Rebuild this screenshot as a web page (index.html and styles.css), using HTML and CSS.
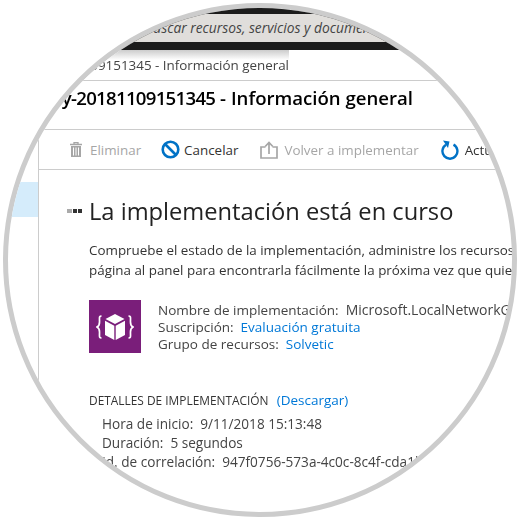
FILE: index.html
```html
<!DOCTYPE html>
<html lang="es">
<head>
    <meta charset="UTF-8">
    <title>Información general</title>
    <link rel="stylesheet" href="styles.css">
</head>
<body>

<div class="lens">
    <div class="topbar">
        <div class="search">Buscar recursos, servicios y documentos</div>
    </div>

    <div class="crumb"><span>Microsoft.LocalNetworkGateway-20181109151345 - Información general</span></div>
    <div class="title"><span><span class="title-id">Microsoft.LocalNetworkGateway-20181109151345</span> - Información general</span></div>

    <div class="panes">
        <div class="sidebar">
            <div class="side-active"></div>
        </div>

        <div class="main">
            <div class="toolbar">
                <div class="tool disabled tool-delete">
                    <svg width="12" height="15" viewBox="0 0 12 15"><path d="M0 2.500h12M4 2.500V.7h4v1.800" fill="none" stroke="#a6a6a6" stroke-width="1.300"/><path d="M1 4h10v11H1z" fill="#a6a6a6"/><path d="M3.500 5.500v8M6 5.500v8M8.500 5.500v8" stroke="#fff" stroke-width="1"/></svg>
                    <span>Eliminar</span>
                </div>
                <div class="tool tool-cancel">
                    <svg width="19" height="19" viewBox="0 0 19 19"><circle cx="9.500" cy="9.500" r="7.800" fill="none" stroke="#0072c6" stroke-width="2.600"/><path d="M4 4l11 11" stroke="#0072c6" stroke-width="2.600"/></svg>
                    <span>Cancelar</span>
                </div>
                <div class="tool disabled tool-redeploy">
                    <svg width="18" height="18" viewBox="0 0 18 18"><path d="M5.500 6H1v11h16V6h-4.500" fill="none" stroke="#a6a6a6" stroke-width="1.700"/><path d="M9 13V2M5.200 5.500L9 1.500l3.800 4" fill="none" stroke="#a6a6a6" stroke-width="1.700"/></svg>
                    <span>Volver a implementar</span>
                </div>
                <div class="tool tool-refresh">
                    <svg width="18" height="20" viewBox="0 0 18 20"><path d="M12.500 4.600A7.500 7.500 0 1 1 5 4.800" fill="none" stroke="#0072c6" stroke-width="2.400"/><path d="M2 0.500l6.500 1-1.500 6.500z" fill="#0072c6"/></svg>
                    <span>Actualizar</span>
                </div>
            </div>

            <div class="content">
                <h1 class="heading">
                    <span class="dots"><i class="dot-faint"></i><i></i><i></i></span>
                    La implementación está en curso
                </h1>

                <p class="intro">Compruebe el estado de la implementación, administre los recursos o ancle esta<br>página al panel para encontrarla fácilmente la próxima vez que quiera volver.</p>

                <div class="summary">
                    <div class="summary-icon">
                        <svg width="38" height="30" viewBox="0 0 38 30">
                            <path d="M5.500 4C3 4 3.500 5.500 3.500 8.500s.5 5-2.500 6.500c3 1.500 2.500 3.500 2.500 6.500S3 26 5.500 26M32.500 4c2.500 0 2 1.500 2 4.500s-.5 5 2.500 6.500c-3 1.500-2.500 3.500-2.500 6.500s.5 4.500-2 4.500" fill="none" stroke="#fff" stroke-width="1.700"/>
                            <path d="M19 2l9.500 5L19 12 9.500 7z" fill="#fff"/>
                            <path d="M9 8.800l9.300 4.900V28L9 23zM29 8.800l-9.300 4.900V28L29 23z" fill="#fff"/>
                        </svg>
                    </div>
                    <div class="summary-text">
                        <div>Nombre de implementación:&nbsp; <span class="summary-value">Microsoft.LocalNetworkGateway</span></div>
                        <div>Suscripción:&nbsp; <a href="#">Evaluación gratuita</a></div>
                        <div>Grupo de recursos:&nbsp; <a href="#">Solvetic</a></div>
                    </div>
                </div>

                <div class="details-head">DETALLES DE IMPLEMENTACIÓN <a href="#">(Descargar)</a></div>
                <div class="details">
                    <div>Hora de inicio:&nbsp; 9/11/2018 15:13:48</div>
                    <div>Duración:&nbsp; 5 segundos</div>
                    <div>Id. de correlación:&nbsp; 947f0756-573a-4c0c-8c4f-cda1b2e7</div>
                </div>
            </div>
        </div>
    </div>
</div>

</body>
</html>
```

FILE: styles.css
```css
body {
    margin: 0;
    background-color: #fff;
    font-family: "Open Sans", "Noto Sans", sans-serif;
    color: #333;
}

/* lupa circular */
.lens {
    width: 514px;
    height: 514px;
    margin: 3px;
    box-sizing: border-box;
    border: 5px solid #ccc;
    border-radius: 50%;
    overflow: hidden;
    background-color: #fff;
    white-space: nowrap;
    filter: blur(0.3px);
}

.topbar {
    height: 42px;
    padding-top: 6px;
    box-sizing: border-box;
    background-color: #1c1c1c;
}

.search {
    height: 28px;
    padding-left: 137px;
    background-color: #e0dedb;
    font-size: 13.800px;
    font-style: italic;
    line-height: 27px;
    color: #444;
}

.crumb,
.title {
    position: relative;
    display: flex;
    justify-content: flex-end;
}

.crumb {
    width: 281px;
    height: 31px;
    background: linear-gradient(#ccc, #fff 10px) no-repeat 0 0 / 504px 100%;
    align-items: center;
    padding-bottom: 1px;
    box-sizing: border-box;
    font-size: 13.400px;
    color: #444;
}

.title {
    width: 405px;
    height: 49px;
    padding-top: 4px;
    box-sizing: border-box;
    font-size: 18.600px;
    font-weight: 600;
    color: #000;
}

.title-id {
    letter-spacing: -0.7px;
}

.crumb::after,
.title::after {
    content: "";
    position: absolute;
    left: 0;
    bottom: 0;
    width: 504px;
    height: 1px;
    background-color: #ccc;
}

.panes {
    display: flex;
    height: 400px;
}

.sidebar {
    width: 30px;
    padding-top: 52px;
    border-right: 1px solid #ccc;
    flex-shrink: 0;
}

.side-active {
    height: 35px;
    background-color: #d5ecfb;
}

.main {
    flex: 1;
    min-width: 0;
}

.toolbar {
    height: 40px;
    box-sizing: border-box;
    padding-left: 31px;
    border-bottom: 1px solid #ccc;
    display: flex;
    align-items: center;
    font-size: 13.400px;
}

.tool {
    display: flex;
    align-items: center;
    color: #333;
}

.tool.disabled {
    color: #a6a6a6;
}

.tool-delete {
    gap: 8px;
    margin-right: 20px;
}

.tool-cancel {
    gap: 4px;
    margin-right: 22px;
}

.tool-redeploy {
    gap: 6px;
    margin-right: 22px;
}

.tool-refresh {
    gap: 6px;
}

.content {
    padding-left: 50px;
}

.heading {
    margin: 24px 0 0 -22px;
    display: flex;
    align-items: center;
    gap: 7px;
    font-size: 23.700px;
    font-weight: 400;
    line-height: 34px;
    color: #222;
}

.dots {
    display: flex;
    gap: 1px;
    width: 15px;
}

.dots i {
    width: 4px;
    height: 4px;
    background-color: #333;
}

.dots .dot-faint {
    width: 5px;
    background-color: #aaa;
}

.intro {
    margin: 12px 0 0;
    font-size: 13.400px;
    line-height: 20px;
    color: #333;
}

.summary {
    margin-top: 20px;
    display: flex;
    gap: 17px;
    align-items: center;
}

.summary-icon {
    width: 52px;
    height: 53px;
    background-color: #7a1e7a;
    display: flex;
    align-items: center;
    justify-content: center;
    flex-shrink: 0;
}

.summary-text {
    font-size: 13.500px;
    line-height: 17px;
    color: #444;
}

.summary-value {
    font-size: 14px;
}

a {
    color: #0078d7;
    text-decoration: none;
}

.details-head {
    margin-top: 38px;
    font-size: 11.900px;
    line-height: 18px;
    color: #333;
}

.details-head a {
    margin-left: 5px;
    font-size: 13.500px;
}

.details {
    margin: 5px 0 0 13px;
    font-size: 13.600px;
    line-height: 19px;
    color: #444;
}
```
